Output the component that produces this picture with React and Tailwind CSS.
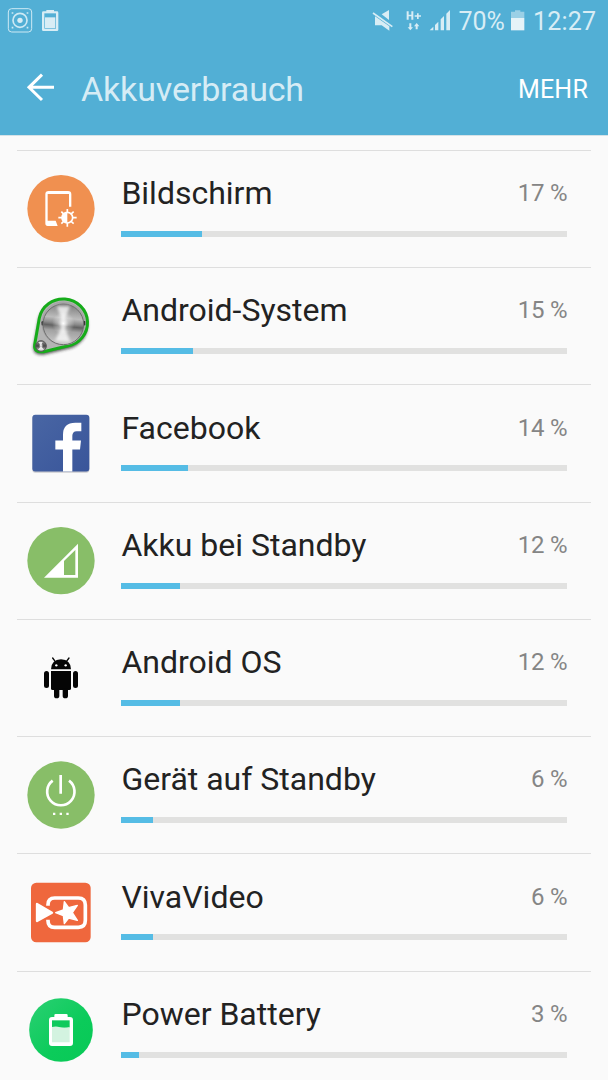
import React from "react";

function Icon({ y, children }) {
  return (
    <svg className="mt-[14px] h-[90px] w-[100px] shrink-0" viewBox={`3 ${y} 300 270`} fill="none">
      {children}
    </svg>
  );
}

const DisplayIcon = () => (
  <Icon y={0}>
    <circle cx="135" cy="131" r="101" fill="#f09050" />
    <path d="M125 183H95Q88 183 88 175V88Q88 78 98 78H156Q166 78 166 88V125H159V87H95V167H119Z" fill="#fff" />
    <circle cx="154" cy="158" r="16" stroke="#fff" strokeWidth="5" />
    <path d="M154 143A15 15 0 0 0 154 173Z" fill="#fff" />
    <path
      d="M154 143V132M154 173V185M139 158H127M169 158H182M144 148L136 140M164 148L173 140M144 168L136 176M164 168L173 176"
      stroke="#fff"
      strokeWidth="5"
    />
  </Icon>
);

const SystemIcon = () => (
  <Icon y={-9}>
    <defs>
      <filter id="shadow" x="-20%" y="-20%" width="140%" height="140%">
        <feGaussianBlur stdDeviation="5" />
      </filter>
      <linearGradient id="metal" x1="0.1" y1="0" x2="0" y2="1">
        <stop offset="0" stopColor="#858585" />
        <stop offset=".3" stopColor="#bcbcbc" />
        <stop offset=".43" stopColor="#8a8a8a" />
        <stop offset=".5" stopColor="#626262" />
        <stop offset=".62" stopColor="#a2a2a2" />
        <stop offset="1" stopColor="#cfcfcf" />
      </linearGradient>
      <linearGradient id="knob" x1="0" y1="0" x2="0" y2="1">
        <stop offset="0" stopColor="#999" />
        <stop offset=".5" stopColor="#444" />
        <stop offset="1" stopColor="#ddd" />
      </linearGradient>
      <radialGradient id="glint">
        <stop offset="0" stopColor="#fff" />
        <stop offset=".5" stopColor="#fff" stopOpacity=".35" />
        <stop offset="1" stopColor="#fff" stopOpacity="0" />
      </radialGradient>
      <filter id="soften">
        <feGaussianBlur stdDeviation="4" />
      </filter>
    </defs>
    <path d="M67 99A75 73 0 1 1 154 187L83 204Q50 208 52 181Z" transform="translate(0 5)" fill="#222" opacity=".75" filter="url(#shadow)" />
    <path d="M70 99A73 71 0 1 1 154 183L83 200Q53 204 56 179Z" fill="#b4b4b4" stroke="#16ac1a" strokeWidth="9" strokeLinejoin="round" />
    <circle cx="142" cy="115" r="66" fill="#a6a6a6" />
    <path d="M76 110L86 106V122L77 121ZM208 109L198 106V122L208 121Z" fill="#333" />
    <circle cx="142" cy="118" r="61" fill="url(#metal)" stroke="#6e6e6e" strokeWidth="3" />
    <path d="M142 115L122 64L162 64ZM142 115L117 168L163 171Z" fill="#fff" opacity=".75" filter="url(#soften)" />
    <circle cx="142" cy="115" r="34" fill="url(#glint)" />
    <circle cx="75" cy="183" r="16" fill="url(#knob)" stroke="#555" strokeWidth="3" />
    <path d="M75 183L67 171H80ZM75 183L66 194H84Z" fill="#fff" opacity=".8" />
    <circle cx="75" cy="182" r="8" fill="url(#glint)" />
  </Icon>
);

const FacebookIcon = () => (
  <Icon y={-2.5}>
    <defs>
      <linearGradient id="fb" x1="0" y1="0" x2="1" y2="1">
        <stop stopColor="#4966a4" />
        <stop offset="1" stopColor="#39559a" />
      </linearGradient>
    </defs>
    <rect x="49" y="48" width="171" height="171" rx="9" fill="#cbcbcf" />
    <rect x="49" y="45" width="171" height="170" rx="9" fill="url(#fb)" />
    <path d="M141 215V149H118V122H141V105Q141 69 178 69H196V94H182Q169 94 169 108V122H195L192 149H169V215Z" fill="#fff" />
  </Icon>
);

const SignalIcon = () => (
  <Icon y={6}>
    <circle cx="135" cy="137" r="101" fill="#88be68" />
    <path fillRule="evenodd" d="M84 188L186 86V188ZM144 138V180H178V105Z" fill="#fff" />
  </Icon>
);

const RobotIcon = () => (
  <Icon y={-18}>
    <g fill="#050505">
      <path d="M105 88Q106 59 135 58Q164 59 165 88Z" />
      <path d="M105 93H165V146Q165 150 160 150H110Q105 150 105 146Z" />
      <rect x="84" y="93" width="15" height="51" rx="7.5" />
      <rect x="171" y="93" width="15" height="51" rx="7.5" />
      <path d="M114 145H130V167A8 8 0 0 1 114 167ZM140 145H156V167A8 8 0 0 1 140 167Z" />
    </g>
    <path d="M110 54L118 65M159 54L151 65" stroke="#050505" strokeWidth="4" strokeLinecap="round" />
    <circle cx="121" cy="76" r="3.5" fill="#fff" />
    <circle cx="149" cy="76" r="3.5" fill="#fff" />
  </Icon>
);

const PowerIcon = () => (
  <Icon y={3}>
    <circle cx="135" cy="135" r="101" fill="#88be68" />
    <path d="M134 75V131M110 92A41 41 0 1 0 159 92" stroke="#fff" strokeWidth="8" />
    <path d="M111 188h7v7h-7zM131 188h7v7h-7zM151 188h7v7h-7z" fill="#fff" />
  </Icon>
);

const VideoIcon = () => (
  <Icon y={-6}>
    <rect x="45" y="38" width="179" height="179" rx="16" fill="#ef673d" />
    <path d="M96 107V104Q96 84 116 84H187Q208 84 208 105V151Q208 172 187 172H116Q96 172 96 152V149" stroke="#fff" strokeWidth="11" />
    <path d="M63 102L108 128L63 153Z" fill="#fff" stroke="#fff" strokeWidth="7" strokeLinejoin="round" />
    <path d="M145 95L158 113L184 106L169 128L184 151L158 144L145 161L142 137L119 128L142 120Z" fill="#fff" stroke="#fff" strokeWidth="4" strokeLinejoin="round" />
  </Icon>
);

const BatteryIcon = () => (
  <Icon y={3}>
    <defs>
      <linearGradient id="green" x1="0" y1="0" x2="1" y2="1">
        <stop stopColor="#2bd073" />
        <stop offset=".6" stopColor="#0bcb5a" />
        <stop offset="1" stopColor="#08c956" />
      </linearGradient>
    </defs>
    <circle cx="135" cy="135" r="95.5" fill="url(#green)" />
    <path d="M115 96V91Q115 87 119 87H151Q155 87 155 91V96H162Q171 96 171 105V174Q171 183 162 183H108Q99 183 99 174V105Q99 96 108 96Z" fill="#fff" />
    <path d="M108 106H161V128H108Z" fill="#0dca5c" />
    <path d="M108 126Q121 122 132 127Q146 132 161 126V172H108Z" fill="#d3f3e0" />
  </Icon>
);

const apps = [
  { name: "Bildschirm", pct: 17, bar: 80.5, Glyph: DisplayIcon },
  { name: "Android-System", pct: 15, bar: 71.5, Glyph: SystemIcon },
  { name: "Facebook", pct: 14, bar: 67, Glyph: FacebookIcon },
  { name: "Akku bei Standby", pct: 12, bar: 58.5, Glyph: SignalIcon },
  { name: "Android OS", pct: 12, bar: 58.5, Glyph: RobotIcon },
  { name: "Gerät auf Standby", pct: 6, bar: 31.5, Glyph: PowerIcon },
  { name: "VivaVideo", pct: 6, bar: 31.5, Glyph: VideoIcon },
  { name: "Power Battery", pct: 3, bar: 18, Glyph: BatteryIcon },
];

function StatusBar() {
  return (
    <div className="flex h-[42px] items-start justify-between pr-[12px] text-[25px] text-[#d8edf5]">
      <svg className="h-[42px] w-[70px]" viewBox="0 0 210 126" fill="none" stroke="#cde9f4">
        <rect x="25" y="26" width="70" height="70" rx="10" strokeWidth="3" />
        <circle cx="60" cy="61" r="21" strokeWidth="5" />
        <circle cx="60" cy="61" r="8" fill="#d8edf5" stroke="none" />
        <path d="M35 39h5M80 39h5M35 83h5M80 83h5" strokeWidth="5" />
        <path d="M139 30H162V34H171Q175 34 175 38V89Q175 93 171 93H130Q126 93 126 89V38Q126 34 130 34H139Z" fill="#d8edf5" stroke="none" />
        <path d="M133 40H168V86H133Z" fill="#52afd5" stroke="none" />
        <path d="M135 52H166V84H135Z" fill="#d8edf5" stroke="none" />
      </svg>
      <div className="flex leading-[44px]">
        <svg className="h-[42px] w-[93px]" viewBox="0 0 279 126" fill="#d8edf5">
          <path d="M53 43L75 30V60ZM33 49L76 79V92L53 76H33Z" />
          <path d="M27 39L85 80" stroke="#d8edf5" strokeWidth="5" />
          <path d="M128 34H134V44H142V34H148V59H142V49H134V59H128ZM159 40H164V46H171V50H164V57H159V50H152V46H159ZM136 70H142V82H147L139 91L131 82H136ZM155 88V79H150L158 69L166 79H161V88Z" />
          <path d="M197 91L208 80V91ZM213 75L223 65V91H213ZM230 58L240 48V91H230ZM247 41L258 30V91H247Z" />
        </svg>
        <span className="w-[52px] whitespace-nowrap pl-[1.5px] tracking-[-0.1px]">70%</span>
        <svg className="h-[42px] w-[24px]" viewBox="435 0 72 126">
          <path d="M441 35H453V31H469V35H481V54H441Z" fill="#9bd0e6" />
          <path d="M441 54H481V91H441Z" fill="#e6f3f8" />
        </svg>
        <span className="w-[63px] whitespace-nowrap tracking-[0.2px]">12:27</span>
      </div>
    </div>
  );
}

export default function App() {
  return (
    <div className="h-[1080px] w-[608px] overflow-hidden bg-[#fafafa] font-['Roboto',sans-serif]">
      <header className="h-[136px] border-b border-[#d5e2e7] bg-[#52afd5]">
        <StatusBar />
        <div className="flex h-[93px] items-center pr-[20px] pl-[24px]">
          <svg className="mb-[3px] h-[34px] w-[34px]" viewBox="72 211 102 102" fill="none" stroke="#fff" strokeWidth="9">
            <path d="M162 263H87M126 225L87 263L126 301" />
          </svg>
          <h1 className="ml-[23px] flex-1 text-[34px] leading-[40px] tracking-[-0.15px] text-[#d6ecf5]">Akkuverbrauch</h1>
          <button className="pt-[2px] text-[25px] leading-[32px] tracking-[0.2px] text-white">MEHR</button>
        </div>
      </header>
      <ul className="mx-[17px] mt-[14px]">
        {apps.map(({ name, pct, bar, Glyph }) => (
          <li key={name} className="flex h-[117.24px] border-t border-[#dedede]">
            <Glyph />
            <div className="ml-[4.4px] w-[446px] pt-[22.26px]">
              <div className="flex h-[40px] items-center justify-between whitespace-nowrap">
                <span className="text-[32px] leading-[40px] text-[#222]">{name}</span>
                <span className="text-[24px] leading-[40px] tracking-[-0.2px] text-[#858585]">{pct} %</span>
              </div>
              <div className="mt-[17.74px] h-[6px] bg-[#e1e1e0]">
                <div className="h-full bg-[#55bce5]" style={{ width: bar }} />
              </div>
            </div>
          </li>
        ))}
      </ul>
    </div>
  );
}
